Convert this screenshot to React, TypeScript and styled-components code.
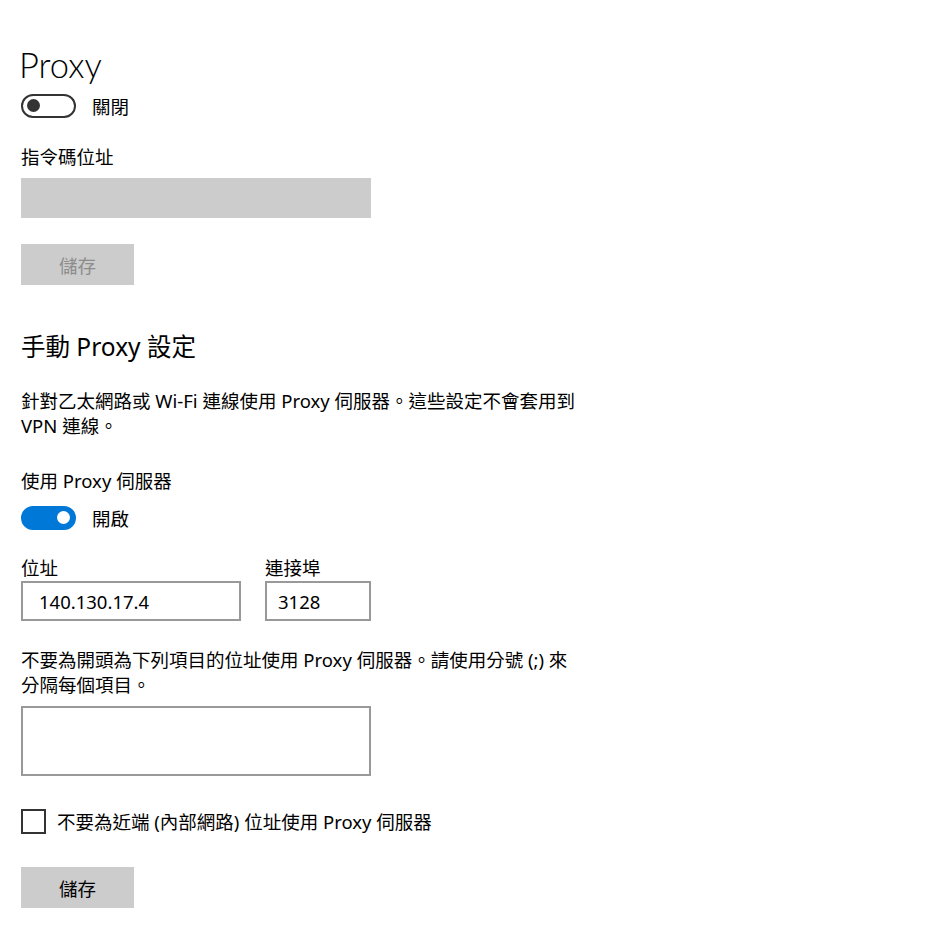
import React from "react";
import styled, { createGlobalStyle } from "styled-components";

const Global = createGlobalStyle`
  html, body { margin: 0; padding: 0; background: #ffffff; }
  body {
    font-family: "Noto Sans", "Noto Sans CJK TC", sans-serif;
    color: #000000;
  }
`;

const Page = styled.main`
  display: flex;
  flex-direction: column;
  align-items: flex-start;
  padding: 45px 0 0 21px;
  width: 600px;
`;

const Title = styled.h1`
  margin: 0;
  font-family: "Lato", "Noto Sans", sans-serif;
  font-weight: 300;
  font-size: 34.5px;
  line-height: 40px;
  margin-left: -2px;
`;

const Subtitle = styled.h2<{ $top: number }>`
  margin: ${(p) => p.$top}px 0 0 0;
  font-weight: 400;
  font-size: 24.5px;
  line-height: 32px;
`;

const Text = styled.p<{ $top: number; $width: number }>`
  margin: ${(p) => p.$top}px 0 0 0;
  font-size: 18.5px;
  line-height: 25px;
  width: ${(p) => p.$width}px;
`;

const Label = styled.label<{ $top?: number }>`
  display: block;
  margin: ${(p) => p.$top ?? 0}px 0 0 0;
  font-size: 18.5px;
  line-height: 26px;
`;

const ToggleRow = styled.div<{ $top: number }>`
  display: flex;
  align-items: center;
  gap: 16px;
  margin-top: ${(p) => p.$top}px;
  height: 23px;
  font-size: 18.5px;
`;

const Track = styled.span<{ $on: boolean }>`
  box-sizing: border-box;
  position: relative;
  display: inline-block;
  width: 55px;
  height: 24px;
  border-radius: 12px;
  border: 2px solid ${(p) => (p.$on ? "#0078d7" : "#333333")};
  background: ${(p) => (p.$on ? "#0078d7" : "#ffffff")};
`;

const Knob = styled.span<{ $on: boolean }>`
  position: absolute;
  top: 3.5px;
  left: ${(p) => (p.$on ? "34px" : "4px")};
  width: 13px;
  height: 13px;
  border-radius: 50%;
  background: ${(p) => (p.$on ? "#ffffff" : "#333333")};
`;

const GrayField = styled.div<{ $top: number }>`
  margin-top: ${(p) => p.$top}px;
  width: 350px;
  height: 40px;
  background: #cccccc;
`;

const Button = styled.button<{ $top: number; $disabled?: boolean }>`
  margin-top: ${(p) => p.$top}px;
  width: 113px;
  height: 41px;
  border: none;
  padding: 0;
  background: #cccccc;
  font-family: "Noto Sans", "Noto Sans CJK TC", sans-serif;
  font-size: 18.5px;
  color: ${(p) => (p.$disabled ? "#8c8c8c" : "#000000")};
`;

const FieldRow = styled.div<{ $top: number }>`
  display: flex;
  gap: 24px;
  margin-top: ${(p) => p.$top}px;
`;

const Field = styled.div`
  display: flex;
  flex-direction: column;
`;

const Input = styled.div<{ $width: number; $inset: number }>`
  box-sizing: border-box;
  width: ${(p) => p.$width}px;
  height: 40px;
  border: 2px solid #999999;
  padding-left: ${(p) => p.$inset}px;
  display: flex;
  align-items: center;
  font-size: 18.5px;
`;

const TextArea = styled.div<{ $top: number }>`
  box-sizing: border-box;
  margin-top: ${(p) => p.$top}px;
  width: 350px;
  height: 70px;
  border: 2px solid #999999;
`;

const CheckRow = styled.div<{ $top: number }>`
  display: flex;
  align-items: center;
  gap: 11px;
  margin-top: ${(p) => p.$top}px;
  height: 25px;
  line-height: 22px;
  font-size: 18.5px;
`;

const Box = styled.span`
  box-sizing: border-box;
  display: inline-block;
  width: 25px;
  height: 25px;
  border: 2px solid #333333;
`;

export default function App() {
  return (
    <>
      <Global />
      <Page>
        <Title>Proxy</Title>
        <ToggleRow $top={9}>
          <Track $on={false}>
            <Knob $on={false} />
          </Track>
          <span>關閉</span>
        </ToggleRow>
        <Label $top={27}>指令碼位址</Label>
        <GrayField $top={8} />
        <Button $top={26} $disabled>
          儲存
        </Button>

        <Subtitle $top={46}>手動 Proxy 設定</Subtitle>
        <Text $top={25} $width={580}>
          針對乙太網路或 Wi-Fi 連線使用 Proxy 伺服器。這些設定不會套用到 VPN 連線。
        </Text>
        <Label $top={30}>使用 Proxy 伺服器</Label>
        <ToggleRow $top={12}>
          <Track $on>
            <Knob $on />
          </Track>
          <span>開啟</span>
        </ToggleRow>

        <FieldRow $top={26}>
          <Field>
            <Label>位址</Label>
            <Input $width={220} $inset={16}>
              140.130.17.4
            </Input>
          </Field>
          <Field>
            <Label>連接埠</Label>
            <Input $width={106} $inset={11}>
              3128
            </Input>
          </Field>
        </FieldRow>

        <Text $top={26} $width={555}>
          不要為開頭為下列項目的位址使用 Proxy 伺服器。請使用分號 (;) 來分隔每個項目。
        </Text>
        <TextArea $top={9} />

        <CheckRow $top={33}>
          <Box />
          <span>不要為近端 (內部網路) 位址使用 Proxy 伺服器</span>
        </CheckRow>
        <Button $top={33}>儲存</Button>
      </Page>
    </>
  );
}
